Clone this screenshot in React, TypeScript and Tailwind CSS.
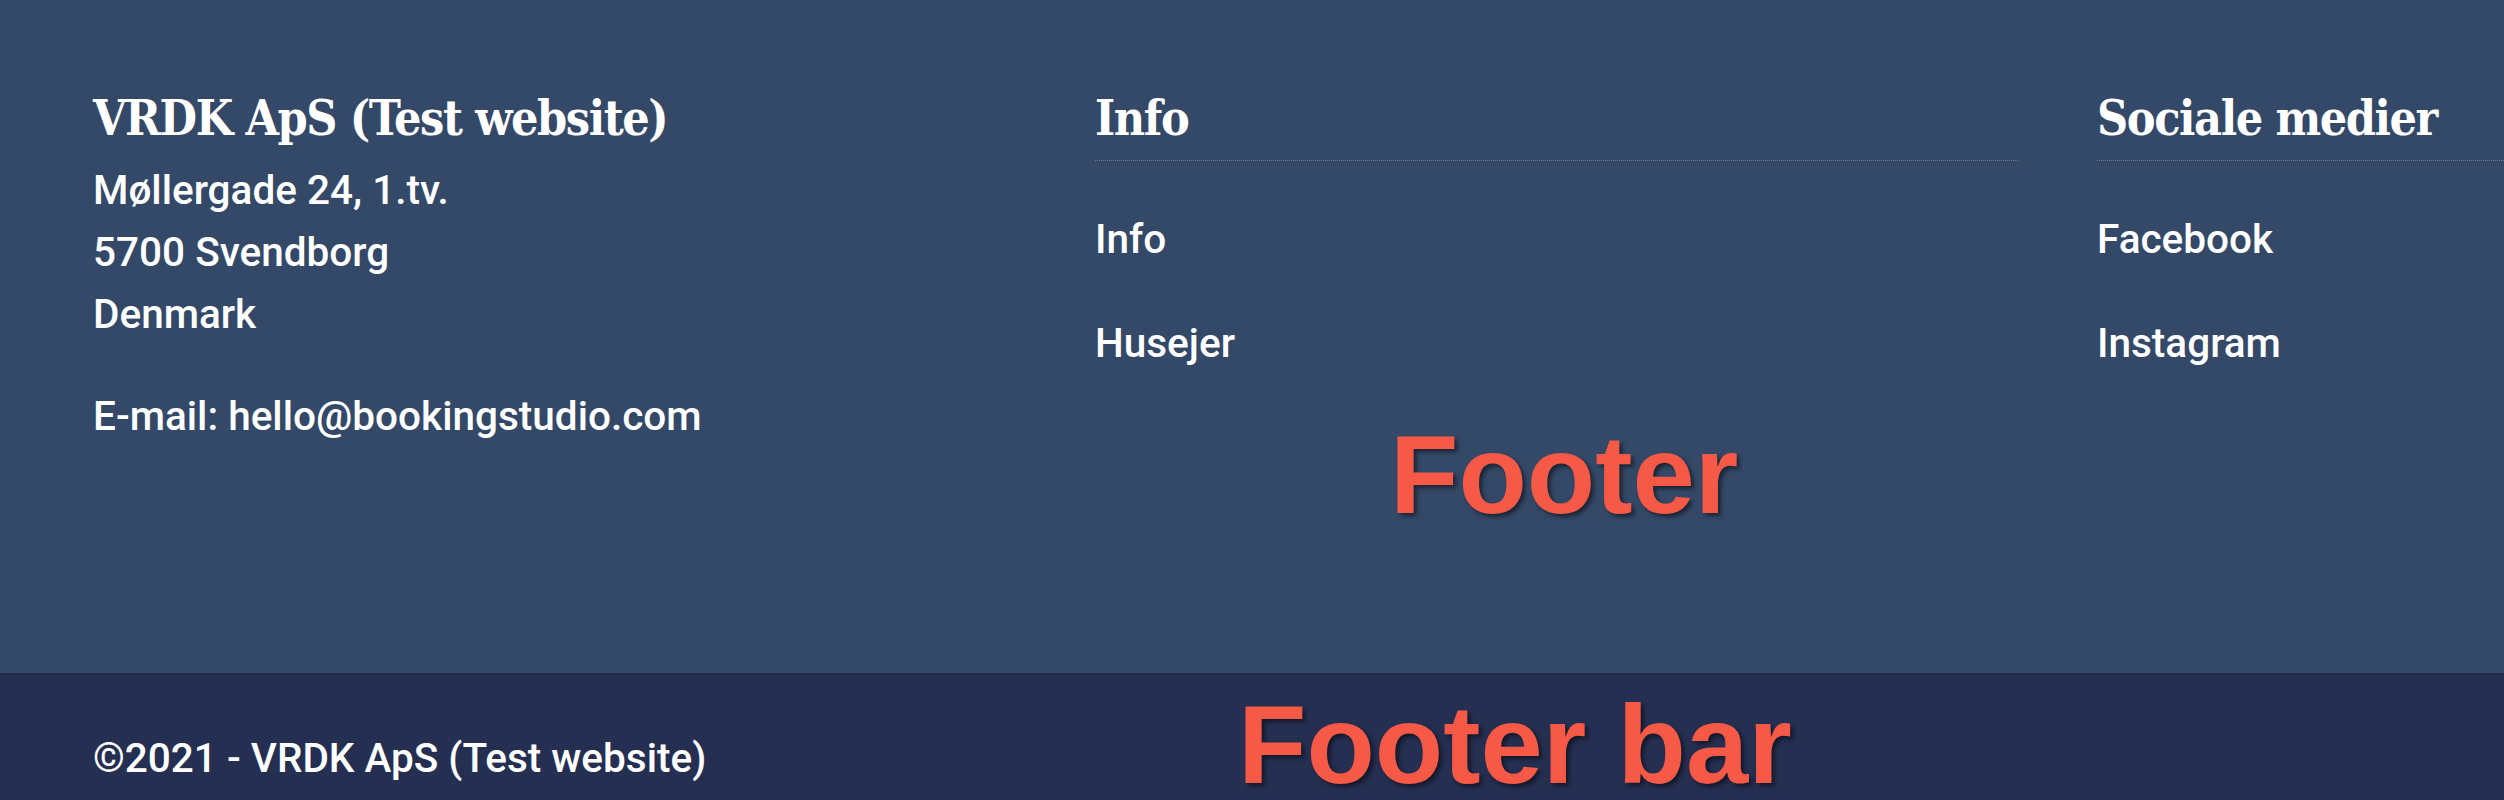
import React from "react";

const serif =
  "font-['DejaVu_Serif_Condensed','DejaVu_Serif',serif] font-bold text-[48px] leading-[58px] tracking-[-1.4px] text-white";
const body = "font-['Roboto',sans-serif] font-medium text-[40.5px] leading-[62px] text-white";

function WidgetTitle({ children }: { children: React.ReactNode }) {
  return (
    <h3 className={`${serif} pb-[13px] border-b border-dotted border-[#6a7e9b]`}>{children}</h3>
  );
}

function LinkList({ items }: { items: string[] }) {
  return (
    <ul className="mt-[47px] flex flex-col gap-[42px]">
      {items.map((t) => (
        <li key={t} className={body}>
          <a>{t}</a>
        </li>
      ))}
    </ul>
  );
}

const label =
  "absolute font-['Liberation_Sans',Arial,sans-serif] font-bold text-[112px] leading-[0.85] text-[#f65a47] whitespace-nowrap [text-shadow:3px_3px_4px_rgba(0,0,0,0.5)]";

export default function App() {
  return (
    <div className="relative w-[2504px] h-[800px] overflow-hidden bg-[#344968]">
      <footer className="h-[673px] bg-[#344968] pt-[89px] pl-[93px]">
        <div className="grid grid-cols-[923px_923px_923px] gap-x-[79px]">
          <div>
            <h3 className={`${serif} mb-[12px] whitespace-nowrap`}>VRDK ApS (Test website)</h3>
            <p className={body}>
              Møllergade 24, 1.tv.
              <br />
              5700 Svendborg
              <br />
              Denmark
            </p>
            <p className={`${body} mt-[40px]`}>E-mail: hello@bookingstudio.com</p>
          </div>
          <div>
            <WidgetTitle>Info</WidgetTitle>
            <LinkList items={["Info", "Husejer"]} />
          </div>
          <div>
            <WidgetTitle>Sociale medier</WidgetTitle>
            <LinkList items={["Facebook", "Instagram"]} />
          </div>
        </div>
      </footer>
      <div className="h-[170px] bg-[#252f52] pt-[54px] pl-[93px] shadow-[inset_0_2px_2px_rgba(0,0,0,0.12)]">
        <p className={body}>©2021 - VRDK ApS (Test website)</p>
      </div>
      <span className={`${label} left-[1390px] top-[427px]`}>Footer</span>
      <span className={`${label} left-[1238px] top-[697px]`}>Footer bar</span>
    </div>
  );
}
